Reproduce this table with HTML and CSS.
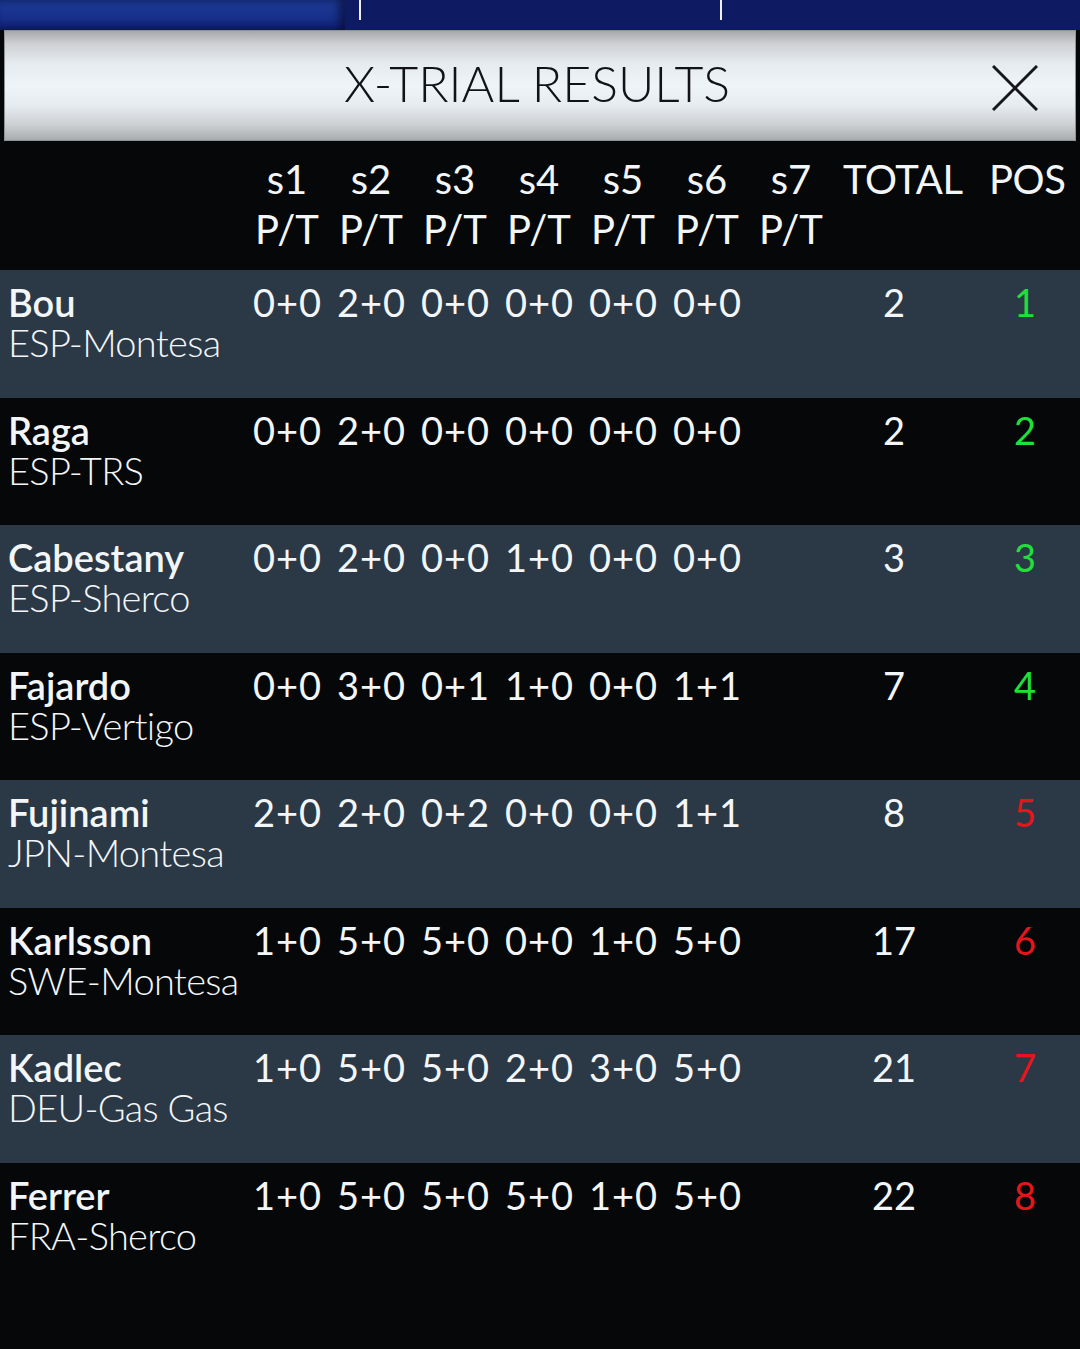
FILE: index.html
```html
<!DOCTYPE html>
<html>
<head>
<meta charset="utf-8">
<link rel="stylesheet" href="styles.css">
</head>
<body>
<div class="topbar">
  <div class="tab tab-active"></div>
  <div class="tab tab-mid"></div>
  <div class="tab tab-last"></div>
</div>
<header class="titlebar">
  <h1 class="title">X-TRIAL RESULTS</h1>
  <button class="close" aria-label="Close">
    <svg width="46" height="46" viewBox="0 0 46 46"><path d="M1 1 L45 45 M45 1 L1 45" stroke="#151719" stroke-width="3" fill="none"/></svg>
  </button>
</header>
<main class="results">
  <div class="row head">
    <div class="c-name"></div>
    <div class="c-h">s1<br>P/T</div>
    <div class="c-h">s2<br>P/T</div>
    <div class="c-h">s3<br>P/T</div>
    <div class="c-h">s4<br>P/T</div>
    <div class="c-h">s5<br>P/T</div>
    <div class="c-h">s6<br>P/T</div>
    <div class="c-h">s7<br>P/T</div>
    <div class="c-htotal">TOTAL</div>
    <div class="c-hpos">POS</div>
  </div>

  <div class="row alt">
    <div class="c-name"><div class="rider">Bou</div><div class="team">ESP-Montesa</div></div>
    <div class="c-s">0+0</div><div class="c-s">2+0</div><div class="c-s">0+0</div><div class="c-s">0+0</div><div class="c-s">0+0</div><div class="c-s">0+0</div><div class="c-s"></div>
    <div class="c-total">2</div><div class="c-pos green">1</div>
  </div>
  <div class="row">
    <div class="c-name"><div class="rider">Raga</div><div class="team">ESP-TRS</div></div>
    <div class="c-s">0+0</div><div class="c-s">2+0</div><div class="c-s">0+0</div><div class="c-s">0+0</div><div class="c-s">0+0</div><div class="c-s">0+0</div><div class="c-s"></div>
    <div class="c-total">2</div><div class="c-pos green">2</div>
  </div>
  <div class="row alt">
    <div class="c-name"><div class="rider">Cabestany</div><div class="team">ESP-Sherco</div></div>
    <div class="c-s">0+0</div><div class="c-s">2+0</div><div class="c-s">0+0</div><div class="c-s">1+0</div><div class="c-s">0+0</div><div class="c-s">0+0</div><div class="c-s"></div>
    <div class="c-total">3</div><div class="c-pos green">3</div>
  </div>
  <div class="row">
    <div class="c-name"><div class="rider">Fajardo</div><div class="team">ESP-Vertigo</div></div>
    <div class="c-s">0+0</div><div class="c-s">3+0</div><div class="c-s">0+1</div><div class="c-s">1+0</div><div class="c-s">0+0</div><div class="c-s">1+1</div><div class="c-s"></div>
    <div class="c-total">7</div><div class="c-pos green">4</div>
  </div>
  <div class="row alt">
    <div class="c-name"><div class="rider">Fujinami</div><div class="team">JPN-Montesa</div></div>
    <div class="c-s">2+0</div><div class="c-s">2+0</div><div class="c-s">0+2</div><div class="c-s">0+0</div><div class="c-s">0+0</div><div class="c-s">1+1</div><div class="c-s"></div>
    <div class="c-total">8</div><div class="c-pos red">5</div>
  </div>
  <div class="row">
    <div class="c-name"><div class="rider">Karlsson</div><div class="team">SWE-Montesa</div></div>
    <div class="c-s">1+0</div><div class="c-s">5+0</div><div class="c-s">5+0</div><div class="c-s">0+0</div><div class="c-s">1+0</div><div class="c-s">5+0</div><div class="c-s"></div>
    <div class="c-total">17</div><div class="c-pos red">6</div>
  </div>
  <div class="row alt">
    <div class="c-name"><div class="rider">Kadlec</div><div class="team">DEU-Gas Gas</div></div>
    <div class="c-s">1+0</div><div class="c-s">5+0</div><div class="c-s">5+0</div><div class="c-s">2+0</div><div class="c-s">3+0</div><div class="c-s">5+0</div><div class="c-s"></div>
    <div class="c-total">21</div><div class="c-pos red">7</div>
  </div>
  <div class="row">
    <div class="c-name"><div class="rider">Ferrer</div><div class="team">FRA-Sherco</div></div>
    <div class="c-s">1+0</div><div class="c-s">5+0</div><div class="c-s">5+0</div><div class="c-s">5+0</div><div class="c-s">1+0</div><div class="c-s">5+0</div><div class="c-s"></div>
    <div class="c-total">22</div><div class="c-pos red">8</div>
  </div>
</main>
</body>
</html>
```
FILE: styles.css
```css
html, body {
  margin: 0;
  padding: 0;
  background: #050709;
  font-family: Lato, "Liberation Sans", sans-serif;
  color: #f3f6f8;
  width: 1080px;
  height: 1349px;
  overflow: hidden;
}

.topbar {
  display: flex;
  height: 30px;
  background: #0e1a62;
}
.tab {
  height: 30px;
}
.tab-active {
  width: 345px;
  background: linear-gradient(#1d3c98, #17308a 60%, #0f1f6c);
  box-shadow: inset -6px 0 8px rgba(5, 12, 50, 0.7);
}
.tab-mid {
  width: 14px;
  border-right: 2px solid #f0f0f0;
  height: 20px;
}
.tab-last {
  width: 359px;
  border-right: 2px solid #f0f0f0;
  height: 20px;
}

.titlebar {
  margin: 0 4px;
  height: 111px;
  box-sizing: border-box;
  border: 1px solid #8f9398;
  background: linear-gradient(#a6a8ab 0%, #cfd1d4 12%, #e6ebef 30%, #eff4f9 50%, #e7ecf0 68%, #cdd0d3 86%, #a9acaf 100%);
  display: flex;
  align-items: center;
  justify-content: center;
  position: relative;
}
.title {
  margin: 0 6px 0 0;
  font-weight: 300;
  font-size: 50px;
  color: #111316;
  line-height: 1;
  padding-bottom: 6px;
}
.close {
  position: absolute;
  right: 37px;
  top: 34px;
  width: 46px;
  height: 46px;
  padding: 0;
  border: 0;
  background: none;
}
.close svg { display: block; }

.row {
  display: grid;
  grid-template-columns: 253px repeat(7, 84px) 106px 1fr;
  height: 127.5px;
  box-sizing: border-box;
  padding-top: 12px;
  font-size: 38px;
  line-height: 40px;
}
.row.alt {
  background: #2b3947;
}
.row.head {
  height: 129px;
  padding-top: 13px;
  font-size: 40px;
  line-height: 50px;
}
.c-name {
  padding-left: 8px;
  white-space: nowrap;
}
.rider {
  font-weight: 600;
}
.team {
  font-weight: 300;
  letter-spacing: -0.7px;
}
.c-h {
  width: 68px;
  text-align: center;
  white-space: nowrap;
}
.c-htotal {
  padding-left: 2px;
  white-space: nowrap;
  letter-spacing: -0.4px;
}
.c-hpos {
  padding-left: 42px;
  letter-spacing: -0.4px;
}
.c-s {
  white-space: nowrap;
  letter-spacing: 1px;
}
.c-total {
  text-align: center;
}
.c-pos {
  padding-left: 67px;
}
.green { color: #1fe03a; }
.red { color: #e5161b; }
```
